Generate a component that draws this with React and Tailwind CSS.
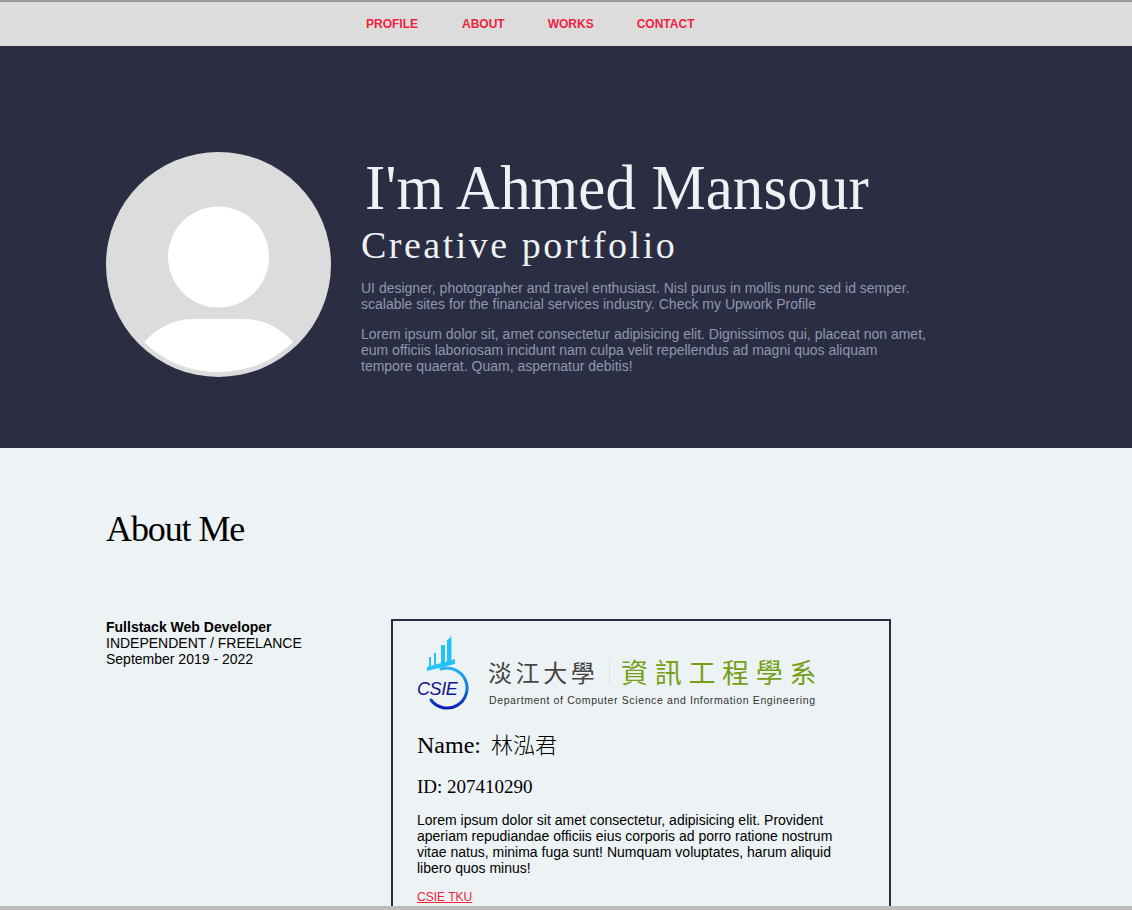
const sans = "font-['Liberation_Sans',Arial,sans-serif]";
const head = "font-['Liberation_Serif','Noto_Sans_CJK_TC',serif] font-normal origin-left whitespace-nowrap";

function Logo() {
  return (
    <svg width="420" height="80" viewBox="0 0 420 80" className="block" fill="none">
      <defs>
        <linearGradient id="ring" x1="0" y1="0" x2="0" y2="1">
          <stop offset="0" stopColor="#2bb4f2" />
          <stop offset="0.55" stopColor="#0f6fe0" />
          <stop offset="1" stopColor="#0a1fb4" />
        </linearGradient>
      </defs>
      <path d="M12 34 V22 H14 V34 Z M17 32 V18 H19 V32 Z M24 30 V10 H28 V30 Z M30 28 V5 L33 3 L33.5 0 L34.5 4 V28 Z" fill="#25c3f5" />
      <path d="M10 36 V32 L38 24 V29 L26 32 Z" fill="#25c3f5" />
      <path d="M24 34 A20 20 0 1 1 14 65" stroke="url(#ring)" strokeWidth="3" strokeLinecap="round" />
      <text x="0" y="60" fontFamily="Liberation Sans, sans-serif" fontStyle="italic" fontSize="18" fill="#13158e" letterSpacing="-0.4">CSIE</text>
      <text x="71" y="47" fontFamily="Noto Sans CJK TC, sans-serif" fontWeight="400" fontSize="24" fill="#454545" letterSpacing="3.6">淡江大學</text>
      <path d="M192.5 24 V49" stroke="#dde2dd" />
      <text x="204" y="48" fontFamily="Noto Sans CJK TC, sans-serif" fontWeight="400" fontSize="27" fill="#75a016" letterSpacing="6.7">資訊工程學系</text>
      <text x="72" y="69" fontFamily="Liberation Sans, sans-serif" fontSize="10.5" fill="#333333" letterSpacing="0.62">Department of Computer Science and Information Engineering</text>
    </svg>
  );
}

export default function App() {
  return (
    <div className={`${sans} relative h-[910px] overflow-hidden bg-[#edf2f4] text-sm leading-4 text-black`}>
      <nav className="flex h-[46px] items-center gap-[43px] border-t-2 border-[#999999] bg-[#dcdcdc] pl-[366px] text-xs font-semibold text-[#ef233c]">
        <a className="mr-px">PROFILE</a>
        <a>ABOUT</a>
        <a>WORKS</a>
        <a>CONTACT</a>
      </nav>

      <section className="flex h-[402px] items-start gap-[30px] bg-[#2b2d42] pt-[106px] pl-[106px]">
        <div className="relative h-[225px] w-[225px] shrink-0 overflow-hidden rounded-full bg-[#dcdcdc]">
          <svg width="225" height="225" viewBox="0 0 225 225" className="block">
            <circle cx="112.5" cy="105" r="50.5" fill="#ffffff" />
            <path d="M38 190 C52 175 68 167 88 167 L137 167 C157 167 173 175 187 190 C165 211 140 220 112.5 220 C85 220 60 211 38 190 Z" fill="#ffffff" />
          </svg>
        </div>
        <div className="w-[570px]">
          <h1 className={`${head} ml-[4px] h-[66px] text-[64px] leading-[72px] tracking-[0.2px] scale-x-[0.95] text-[#edf2f4]`}>I'm Ahmed Mansour</h1>
          <h2 className={`${head} mt-[7px] h-[40px] text-[38px] leading-[40px] tracking-[2.5px] text-[#edf2f4]`}>Creative portfolio</h2>
          <p className="mt-[15px] text-[#8d99ae]">UI designer, photographer and travel enthusiast. Nisl purus in mollis nunc sed id semper. scalable sites for the financial services industry. Check my Upwork Profile</p>
          <p className="mt-[14px] text-[#8d99ae]">Lorem ipsum dolor sit, amet consectetur adipisicing elit. Dignissimos qui, placeat non amet, eum officiis laboriosam incidunt nam culpa velit repellendus ad magni quos aliquam tempore quaerat. Quam, aspernatur debitis!</p>
        </div>
      </section>

      <section className="pt-[61px] pl-[106px]">
        <h2 className={`${head} h-[40px] text-[36px] leading-[40px] tracking-[-1.1px] text-black`}>About Me</h2>
        <div className="mt-[70px] flex items-start">
          <div className="w-[285px] shrink-0">
            <div className="font-bold">Fullstack Web Developer</div>
            <div>INDEPENDENT / FREELANCE</div>
            <div>September 2019 - 2022</div>
          </div>
          <article className="w-[500px] shrink-0 border-2 border-[#2b2d42] px-[24px] pt-[14px] pb-[24px]">
            <Logo />
            <h3 className={`${head} mt-[16px] h-[28px] text-[24px] leading-[28px] text-black`}>
              Name: <span className="ml-[4px] text-[22px] font-light">林泓君</span>
            </h3>
            <h4 className={`${head} mt-[17px] h-[22px] text-[19px] leading-[22px] text-black`}>ID: 207410290</h4>
            <p className="mt-[14px] w-[420px]">Lorem ipsum dolor sit amet consectetur, adipisicing elit. Provident aperiam repudiandae officiis eius corporis ad porro ratione nostrum vitae natus, minima fuga sunt! Numquam voluptates, harum aliquid libero quos minus!</p>
            <a className="mt-[13px] block text-xs text-[#ef233c] underline">CSIE TKU</a>
          </article>
        </div>
      </section>

      <div className="absolute right-0 bottom-0 left-0 h-[4px] bg-[#bdbdbd]" />
    </div>
  );
}
